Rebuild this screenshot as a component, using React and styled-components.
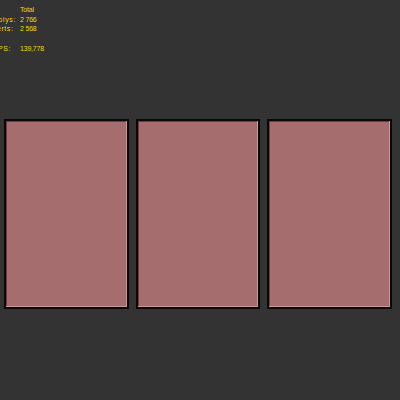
import React from 'react';
import styled, { createGlobalStyle } from 'styled-components';

const GlobalStyle = createGlobalStyle`
  html, body {
    margin: 0;
    padding: 0;
    background: #333333;
  }
  body {
    width: 400px;
    height: 400px;
    overflow: hidden;
  }
`;

const Viewport = styled.div`
  width: 400px;
  height: 400px;
  background: #333333;
  display: flex;
  flex-direction: column;
`;

const Stats = styled.div`
  display: grid;
  grid-template-columns: 20px auto;
  padding-top: 5px;
  font-family: "Liberation Sans", Arial, sans-serif;
  font-size: 7px;
  letter-spacing: -0.2px;
  line-height: 9.7px;
  color: #ebdc00;
`;

// labels are clipped by the viewport's left edge, as in the screenshot
const Label = styled.div`
  display: flex;
  justify-content: flex-end;
  overflow: hidden;
  white-space: nowrap;
  letter-spacing: 0.6px;
  padding-right: ${({ $end }) => 20 - $end}px;
`;

const Value = styled.div`
  white-space: nowrap;
`;

const Panels = styled.div`
  display: flex;
  gap: 7px;
  padding: 0 8px 0 4px;
  margin-top: 65px;
`;

const Panel = styled.div`
  flex: 1;
  height: 186px;
  background: #a66d6e;
  border: 2px solid #0c0707;
  box-shadow: inset -1px -1px 0 #c79a9a, inset 1px 1px 0 #6e3c3d;
`;

const rows = [
  ['', 'Total', 16],
  ['Polys:', '2 766', 16],
  ['Verts:', '2 568', 13.5],
  ['', '\u00a0', 16],
  ['FPS:', '139,778', 11],
];

export default function App() {
  return (
    <>
      <GlobalStyle />
      <Viewport>
        <Stats>
          {rows.map(([l, v, end], i) => (
            <React.Fragment key={i}>
              <Label $end={end}>{l}</Label>
              <Value>{v}</Value>
            </React.Fragment>
          ))}
        </Stats>
        <Panels>
          <Panel />
          <Panel />
          <Panel />
        </Panels>
      </Viewport>
    </>
  );
}
